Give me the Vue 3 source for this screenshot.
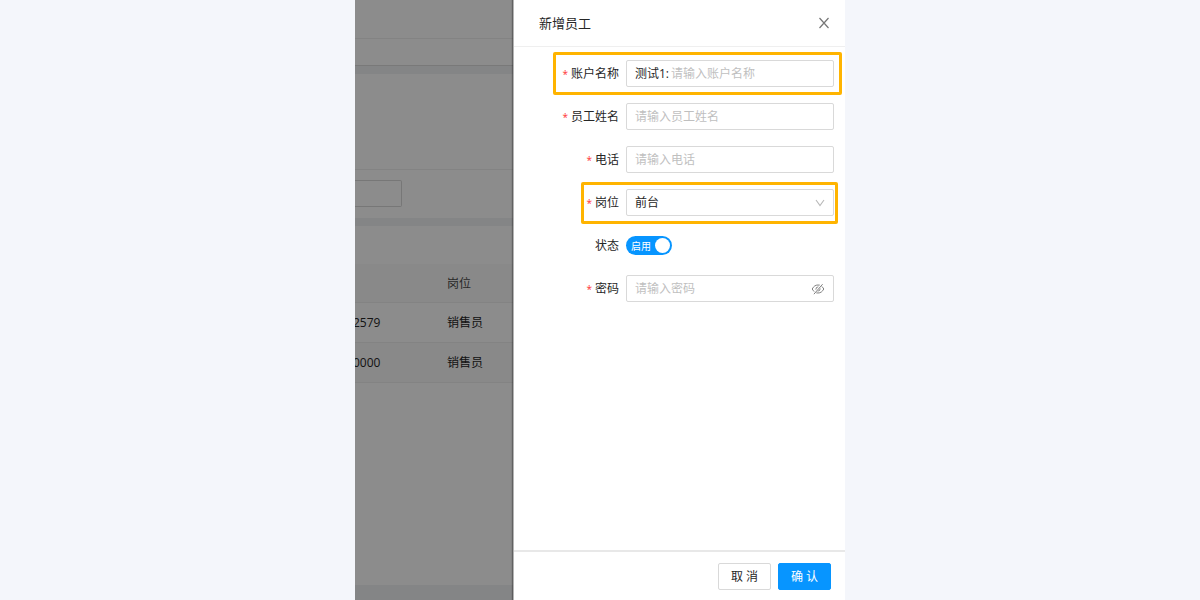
<script setup>
import { reactive } from 'vue'

const staff = [
  { phone: '2579', post: '销售员' },
  { phone: '0000', post: '销售员' }
]

const form = reactive({
  account: '',
  name: '',
  phone: '',
  post: '前台',
  enabled: true,
  password: ''
})
</script>

<template>
  <div class="canvas">
    <div class="stage">
      <div class="page">
        <div class="bar bar-top"></div>
        <div class="bar bar-tabs"></div>
        <section class="card filters">
          <div class="filter-space"></div>
          <div class="filter-row">
            <input class="filter-input" type="text" aria-label="筛选" />
          </div>
        </section>
        <section class="card list">
          <table>
            <thead>
              <tr>
                <th class="col-phone"></th>
                <th>岗位</th>
              </tr>
            </thead>
            <tbody>
              <tr v-for="(row, i) in staff" :key="row.phone" :class="{ shaded: i % 2 }">
                <td class="col-phone">{{ row.phone }}</td>
                <td>{{ row.post }}</td>
              </tr>
            </tbody>
          </table>
        </section>
        <div class="mask"></div>
      </div>

      <aside class="drawer" role="dialog" aria-labelledby="drawer-title">
        <header class="drawer-head">
          <h1 id="drawer-title">新增员工</h1>
          <button class="close" type="button" aria-label="关闭">
            <svg viewBox="0 0 12 12" width="12" height="12">
              <path d="M1.5 1 10.5 11M10.5 1 1.5 11" fill="none" stroke="#777" stroke-width="1.2" />
            </svg>
          </button>
        </header>

        <form id="staff-form" class="drawer-body" @submit.prevent>
          <div class="row marked marked-wide">
            <label class="required" for="account">账户名称</label>
            <div class="field">
              <span class="prefix">测试1:</span>
              <input id="account" v-model="form.account" type="text" placeholder="请输入账户名称" />
            </div>
          </div>
          <div class="row">
            <label class="required" for="name">员工姓名</label>
            <div class="field">
              <input id="name" v-model="form.name" type="text" placeholder="请输入员工姓名" />
            </div>
          </div>
          <div class="row">
            <label class="required" for="phone">电话</label>
            <div class="field">
              <input id="phone" v-model="form.phone" type="tel" placeholder="请输入电话" />
            </div>
          </div>
          <div class="row marked marked-narrow">
            <label class="required" for="post">岗位</label>
            <div class="field">
              <select id="post" v-model="form.post">
                <option>前台</option>
                <option>销售员</option>
              </select>
              <svg class="arrow" viewBox="0 0 10 10" width="10" height="10">
                <path d="M1 2 5 7.500 9 2" fill="none" stroke="#b8b8b8" stroke-width="1.1" />
              </svg>
            </div>
          </div>
          <div class="row">
            <label for="enabled">状态</label>
            <div class="switch" :class="{ on: form.enabled }">
              <input id="enabled" v-model="form.enabled" type="checkbox" role="switch" />
              <span class="switch-text">启用</span>
              <span class="knob"></span>
            </div>
          </div>
          <div class="row">
            <label class="required" for="password">密码</label>
            <div class="field">
              <input id="password" v-model="form.password" type="password" placeholder="请输入密码" />
              <button class="eye" type="button" aria-label="显示密码">
                <svg viewBox="0 0 14 12" width="14" height="12" fill="none" stroke="#808080">
                  <path d="M1.2 6C2.6 3.3 4.5 2 7 2s4.400 1.300 5.800 4C11.400 8.700 9.500 10 7 10S2.600 8.700 1.200 6Z" />
                  <circle cx="7" cy="6" r="2" />
                  <path d="M11.300 .9 2.700 11.100" stroke="#fff" stroke-width="2" />
                  <path d="M11.600 1.200 2.900 11.200" />
                </svg>
              </button>
            </div>
          </div>
        </form>

        <footer class="drawer-foot">
          <button class="btn" type="button">取 消</button>
          <button class="btn primary" type="submit" form="staff-form">确 认</button>
        </footer>
      </aside>
    </div>
  </div>
</template>

<style>
body {
  background: #f4f6fb;
}
</style>

<style scoped>
.canvas,
.canvas * {
  box-sizing: border-box;
}
.canvas {
  display: flex;
  justify-content: center;
  min-height: 100vh;
  background: #f4f6fb;
  color: #262626;
  font-family: "Open Sans", "Noto Sans CJK SC", sans-serif;
  font-size: 12px;
  line-height: 18px;
}
input,
select,
button {
  margin: 0;
  color: inherit;
  font: inherit;
}
.stage {
  display: flex;
  width: 100%;
  max-width: 490px;
  overflow: hidden;
}

/* Dimmed list page */
.page {
  position: relative;
  display: flex;
  flex: 1;
  flex-direction: column;
  min-width: 0;
  padding-bottom: 15px;
  overflow: hidden;
  background: #f0f2f5;
}
.bar {
  background: #fff;
  border-bottom: 1px solid #efefef;
}
.bar-top {
  height: 39px;
}
.bar-tabs {
  height: 27px;
  margin-bottom: 8px;
  border-bottom-color: #dcdcdc;
}
.card {
  background: #fff;
}
.filters {
  margin-bottom: 8px;
}
.filter-space {
  height: 96px;
  border-bottom: 1px solid #efefef;
}
.filter-row {
  padding: 10px 0 11px;
}
.filter-input {
  display: block;
  width: 47px;
  height: 27px;
  background: #fff;
  border: 1px solid #d9d9d9;
  border-left: 0;
  border-radius: 0 2px 2px 0;
}
.list {
  flex: 1;
  padding-top: 38px;
}
table {
  width: calc(100% + 14px);
  margin-left: -14px;
  border-collapse: separate;
  border-spacing: 0;
}
th,
td {
  height: 40px;
  padding: 1px 12px 0;
  border-bottom: 1px solid #efefef;
  font-weight: 400;
  text-align: left;
}
th {
  height: 39px;
  padding-top: 2px;
  background: #fafafa;
  color: #4a4a4a;
}
.col-phone {
  width: 94px;
}
.shaded td {
  background: #fafafa;
}
.mask {
  position: absolute;
  inset: 0;
  background: rgba(0, 0, 0, 0.45);
}

/* Drawer */
.drawer {
  position: relative;
  display: flex;
  flex: 0 1 332px;
  flex-direction: column;
  background: #fff;
  border-left: 1px solid #b4b4b4;
  box-shadow: -1px 0 1px rgba(0, 0, 0, 0.3);
}
.drawer-head {
  display: flex;
  align-items: center;
  justify-content: space-between;
  height: 47px;
  padding: 0 15px 0 25px;
  border-bottom: 1px solid #efefef;
}
h1 {
  margin: 0;
  font-size: 13px;
  font-weight: 400;
}
.close,
.eye {
  display: flex;
  padding: 0;
  background: none;
  border: 0;
}
.drawer-body {
  display: flex;
  flex: 1;
  flex-direction: column;
  gap: 16px;
  padding: 13px 11px 16px 40px;
}
.row {
  position: relative;
  display: flex;
  align-items: center;
  gap: 7px;
  height: 27px;
}
.row > label {
  flex: 1;
  text-align: right;
  white-space: nowrap;
}
.required::before {
  content: "*";
  margin-right: 3px;
  color: #ff3333;
  font-size: 10px;
}
.field {
  display: flex;
  align-items: center;
  flex: 0 0 208px;
  height: 27px;
  padding: 0 8px;
  background: #fff;
  border: 1px solid #d9d9d9;
  border-radius: 2px;
}
.field input,
.field select {
  flex: 1;
  min-width: 0;
  height: 25px;
  padding: 0;
  background: none;
  border: 0;
  outline: 0;
  appearance: none;
}
.field input::placeholder {
  color: #bfbfbf;
  opacity: 1;
}
.prefix {
  margin-right: 2px;
}
.arrow {
  pointer-events: none;
}
.marked::after {
  content: "";
  position: absolute;
  top: -8px;
  right: -8px;
  bottom: -8px;
  left: -1px;
  border: 3px solid #ffb400;
  border-radius: 2px;
  pointer-events: none;
}
.marked-narrow::after {
  top: -7px;
  right: -4px;
  left: 27px;
}
.switch {
  position: relative;
  display: flex;
  align-items: center;
  justify-content: space-between;
  width: 46px;
  height: 19px;
  margin-right: 162px;
  padding: 0 2px 0 5px;
  background: #bfbfbf;
  border-radius: 10px;
  color: #fff;
  font-size: 10px;
}
.switch.on {
  background: #0795ff;
}
.switch input {
  position: absolute;
  inset: 0;
  width: 100%;
  height: 100%;
  opacity: 0;
}
.knob {
  width: 15px;
  height: 15px;
  background: #fff;
  border-radius: 50%;
}
.drawer-foot {
  display: flex;
  justify-content: flex-end;
  gap: 7px;
  padding: 11px 14px 10px;
  border-top: 2px solid #e8e8e8;
}
.btn {
  width: 53px;
  height: 27px;
  padding: 0;
  background: #fff;
  border: 1px solid #d9d9d9;
  border-radius: 2px;
}
.btn.primary {
  background: #0795ff;
  border-color: #0795ff;
  color: #fff;
}
</style>
